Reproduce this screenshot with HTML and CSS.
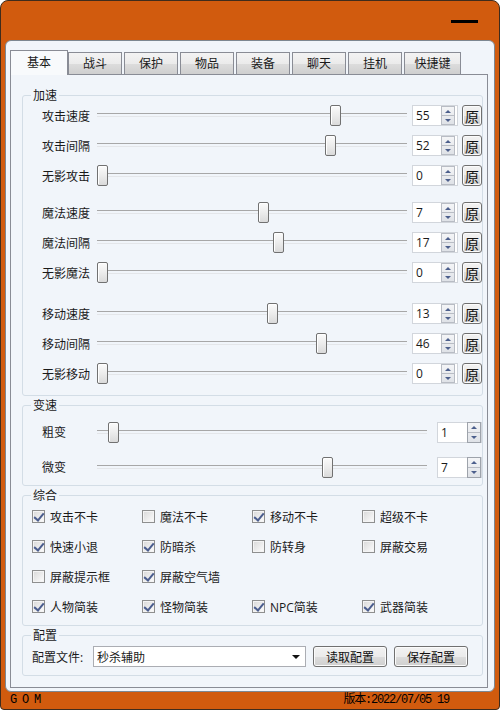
FILE: index.html
```html
<!DOCTYPE html>
<html lang="zh-CN">

<head>
    <meta charset="UTF-8">
    <meta name="viewport" content="width=device-width, initial-scale=1.0">
    <title>GOM</title>
    <link rel="stylesheet" href="styles.css">
</head>

<body>
    <div class="window">
        <div class="titlebar"><span class="min-btn"></span></div>

        <div class="client">
            <div class="tabs">
                <div class="tab active">基本</div>
                <div class="tab">战斗</div>
                <div class="tab">保护</div>
                <div class="tab">物品</div>
                <div class="tab">装备</div>
                <div class="tab">聊天</div>
                <div class="tab">挂机</div>
                <div class="tab wide">快捷键</div>
            </div>

            <div class="pane">
                <!-- 加速 -->
                <div class="group speed">
                    <span class="group-title">加速</span>

                    <div class="block">
                        <div class="row">
                            <span class="label">攻击速度</span>
                            <div class="track"><span class="thumb" style="left: 233px"></span></div>
                            <div class="spin"><span class="num">55</span><span class="arrows"><i class="up"></i><i class="down"></i></span></div>
                            <button class="reset">原</button>
                        </div>
                        <div class="row">
                            <span class="label">攻击间隔</span>
                            <div class="track"><span class="thumb" style="left: 228px"></span></div>
                            <div class="spin"><span class="num">52</span><span class="arrows"><i class="up"></i><i class="down"></i></span></div>
                            <button class="reset">原</button>
                        </div>
                        <div class="row">
                            <span class="label">无影攻击</span>
                            <div class="track"><span class="thumb" style="left: 0px"></span></div>
                            <div class="spin"><span class="num">0</span><span class="arrows"><i class="up"></i><i class="down"></i></span></div>
                            <button class="reset">原</button>
                        </div>
                    </div>

                    <div class="block magic">
                        <div class="row">
                            <span class="label">魔法速度</span>
                            <div class="track"><span class="thumb" style="left: 161px"></span></div>
                            <div class="spin"><span class="num">7</span><span class="arrows"><i class="up"></i><i class="down"></i></span></div>
                            <button class="reset">原</button>
                        </div>
                        <div class="row">
                            <span class="label">魔法间隔</span>
                            <div class="track"><span class="thumb" style="left: 176px"></span></div>
                            <div class="spin"><span class="num">17</span><span class="arrows"><i class="up"></i><i class="down"></i></span></div>
                            <button class="reset">原</button>
                        </div>
                        <div class="row">
                            <span class="label">无影魔法</span>
                            <div class="track"><span class="thumb" style="left: 0px"></span></div>
                            <div class="spin"><span class="num">0</span><span class="arrows"><i class="up"></i><i class="down"></i></span></div>
                            <button class="reset">原</button>
                        </div>
                    </div>

                    <div class="block move">
                        <div class="row">
                            <span class="label">移动速度</span>
                            <div class="track"><span class="thumb" style="left: 170px"></span></div>
                            <div class="spin"><span class="num">13</span><span class="arrows"><i class="up"></i><i class="down"></i></span></div>
                            <button class="reset">原</button>
                        </div>
                        <div class="row">
                            <span class="label">移动间隔</span>
                            <div class="track"><span class="thumb" style="left: 219px"></span></div>
                            <div class="spin"><span class="num">46</span><span class="arrows"><i class="up"></i><i class="down"></i></span></div>
                            <button class="reset">原</button>
                        </div>
                        <div class="row">
                            <span class="label">无影移动</span>
                            <div class="track"><span class="thumb" style="left: 0px"></span></div>
                            <div class="spin"><span class="num">0</span><span class="arrows"><i class="up"></i><i class="down"></i></span></div>
                            <button class="reset">原</button>
                        </div>
                    </div>
                </div>

                <!-- 变速 -->
                <div class="group shift">
                    <span class="group-title">变速</span>
                    <div class="row">
                        <span class="label">粗变</span>
                        <div class="track long"><span class="thumb" style="left: 11px"></span></div>
                        <div class="spin buddy"><span class="num">1</span><span class="arrows"><i class="up"></i><i class="down"></i></span></div>
                    </div>
                    <div class="row">
                        <span class="label">微变</span>
                        <div class="track long"><span class="thumb" style="left: 225px"></span></div>
                        <div class="spin buddy"><span class="num">7</span><span class="arrows"><i class="up"></i><i class="down"></i></span></div>
                    </div>
                </div>

                <!-- 综合 -->
                <div class="group misc">
                    <span class="group-title">综合</span>
                    <div class="checks">
                        <label class="opt"><span class="box on"></span>攻击不卡</label>
                        <label class="opt"><span class="box"></span>魔法不卡</label>
                        <label class="opt"><span class="box on"></span>移动不卡</label>
                        <label class="opt"><span class="box"></span>超级不卡</label>

                        <label class="opt"><span class="box on"></span>快速小退</label>
                        <label class="opt"><span class="box on"></span>防暗杀</label>
                        <label class="opt"><span class="box"></span>防转身</label>
                        <label class="opt"><span class="box"></span>屏蔽交易</label>

                        <label class="opt"><span class="box"></span>屏蔽提示框</label>
                        <label class="opt"><span class="box on"></span>屏蔽空气墙</label>
                        <span></span>
                        <span></span>

                        <label class="opt"><span class="box on"></span>人物简装</label>
                        <label class="opt"><span class="box on"></span>怪物简装</label>
                        <label class="opt"><span class="box on"></span>NPC简装</label>
                        <label class="opt"><span class="box on"></span>武器简装</label>
                    </div>
                </div>

                <!-- 配置 -->
                <div class="group config">
                    <span class="group-title">配置</span>
                    <div class="row">
                        <span class="label">配置文件:</span>
                        <div class="combo"><span>秒杀辅助</span><i class="drop"></i></div>
                        <button class="btn">读取配置</button>
                        <button class="btn">保存配置</button>
                    </div>
                </div>
            </div>
        </div>

        <div class="status">
            <span>G O M</span>
            <span>版本:2022/07/05 19</span>
        </div>
    </div>
</body>

</html>
```

FILE: styles.css
```css
* {
    box-sizing: border-box;
}

body {
    margin: 0;
    background: #fff;
    font-family: "Open Sans", "Noto Sans CJK SC", sans-serif;
    font-size: 12px;
    color: #1a1a1a;
}

.window {
    width: 500px;
    height: 710px;
    background: #d15b0e;
    border: 1px solid #3f2c1c;
    border-radius: 8px 8px 4px 4px;
    display: flex;
    flex-direction: column;
}

.titlebar {
    height: 39px;
    display: flex;
    justify-content: flex-end;
    padding: 19px 21px 0 0;
}

.min-btn {
    width: 27px;
    height: 3px;
    background: #000;
}

.client {
    height: 653px;
    margin: 0 4px;
    border: 1px solid #7d8791;
    border-radius: 6px;
    background: #f1f5fa;
    padding: 9px 6px 3px 4px;
    display: flex;
    flex-direction: column;
}

/* tabs */
.tabs {
    display: flex;
    align-items: flex-end;
    height: 24px;
}

.tab {
    width: 54px;
    height: 22px;
    margin-right: 2px;
    border: 1px solid #898c95;
    border-bottom: none;
    background: linear-gradient(#f3f3f3, #ebebeb 50%, #dddddd 50%, #cfcfcf);
    text-align: center;
    line-height: 21px;
}

.tab.wide {
    width: 57px;
}

.tab.active {
    width: 58px;
    height: 25px;
    margin-right: 0;
    margin-bottom: -1px;
    background: #f8fafc;
    position: relative;
    z-index: 1;
    line-height: 23px;
}

.pane {
    flex: 1;
    border: 1px solid #898c95;
    padding: 20px 4px 0 11px;
    display: flex;
    flex-direction: column;
    gap: 9px;
}

/* group boxes */
.group {
    position: relative;
    border: 1px solid #d3dde6;
    border-radius: 3px;
}

.group-title {
    position: absolute;
    top: -9px;
    left: 8px;
    padding: 0 2px;
    background: #f1f5fa;
    line-height: 17px;
}

.speed {
    padding: 5px 0 6px 19px;
}

.block.magic {
    margin-top: 7px;
}

.block.move {
    margin-top: 11px;
}

.shift {
    padding: 9px 0 0 19px;
}

.shift .row {
    height: 35px;
}

.misc {
    padding: 6px 0 3px 9px;
}

.config {
    padding: 6px 0 3px 9px;
}

.row {
    height: 30px;
    display: flex;
    align-items: center;
}

.label {
    width: 55px;
    flex: none;
}

/* slider */
.track {
    position: relative;
    width: 310px;
    height: 21px;
    margin-right: 5px;
}

.track.long {
    width: 330px;
    margin-right: 10px;
}

.track::before {
    content: "";
    position: absolute;
    left: 0;
    right: 0;
    top: 8px;
    height: 2px;
    border-top: 1px solid #a7a7a7;
    border-bottom: 1px solid #e4e6e9;
}

.thumb {
    position: absolute;
    top: 0;
    width: 11px;
    height: 21px;
    border: 1px solid #717171;
    border-radius: 2px;
    background: linear-gradient(#fbfbfb, #ececec 50%, #dadada);
    box-shadow: inset 1px 1px 0 #fff;
}

/* spin box */
.spin {
    width: 46px;
    height: 21px;
    border: 1px solid #d2d6dc;
    background: #fff;
    display: flex;
    align-items: center;
    justify-content: space-between;
    padding: 0 2px 0 3px;
    margin-right: 4px;
}

.spin.buddy {
    width: 45px;
    margin-right: 0;
    padding-right: 0;
}

.num {
    line-height: 17px;
}

.arrows {
    width: 14px;
    height: 19px;
    border: 1px solid #b8bcc4;
    display: flex;
    flex-direction: column;
    background: linear-gradient(#f4f5f7, #dfe2e7);
}

.buddy .arrows {
    height: 21px;
    border-color: #9ea3ab;
}

.arrows i {
    flex: 1;
    display: flex;
    align-items: center;
    justify-content: center;
}

.arrows i + i {
    border-top: 1px solid #b8bcc4;
}

.arrows i::before {
    content: "";
    border-left: 3px solid transparent;
    border-right: 3px solid transparent;
}

.arrows .up::before {
    border-bottom: 3px solid #4c5f8c;
}

.arrows .down::before {
    border-top: 3px solid #4c5f8c;
}

/* buttons */
.reset,
.btn {
    border: 1px solid #707070;
    border-radius: 3px;
    background: linear-gradient(#f2f2f2, #ebebeb 50%, #dddddd 50%, #cfcfcf);
    box-shadow: inset 0 0 0 1px #fbfbfb;
    font-family: "Noto Sans CJK SC", sans-serif;
    color: #111;
    padding: 0;
}

.reset {
    width: 20px;
    height: 21px;
    font-size: 14px;
    line-height: 18px;
}

.btn {
    width: 74px;
    height: 21px;
    font-size: 12px;
    line-height: 18px;
    margin-left: 7px;
}

/* check boxes */
.checks {
    display: grid;
    grid-template-columns: repeat(4, 110px);
    grid-auto-rows: 30px;
}

.opt {
    display: flex;
    align-items: center;
    gap: 5px;
}

.box {
    width: 13px;
    height: 13px;
    border: 1px solid #8e8f8f;
    background: linear-gradient(135deg, #d8d8d8, #fdfdfd);
    box-shadow: inset 0 0 0 1px #f4f4f4;
    position: relative;
}

.box.on::after {
    content: "";
    position: absolute;
    left: 3px;
    top: 0px;
    width: 4px;
    height: 8px;
    border-right: 2px solid #4a5d8e;
    border-bottom: 2px solid #4a5d8e;
    transform: rotate(40deg);
}

/* config */
.config .label {
    width: 61px;
}

.combo {
    width: 213px;
    height: 21px;
    border: 1px solid #abadb3;
    background: #fff;
    display: flex;
    align-items: center;
    justify-content: space-between;
    padding: 0 5px 0 3px;
}

.drop {
    border-left: 4px solid transparent;
    border-right: 4px solid transparent;
    border-top: 4px solid #111;
}

/* status bar */
.status {
    height: 17px;
    display: flex;
    justify-content: space-between;
    padding: 0 50px 0 9px;
    font-family: "Liberation Mono", "Noto Sans CJK SC", monospace;
    font-size: 12px;
    letter-spacing: -1.2px;
    line-height: 17px;
    color: #000;
    white-space: pre;
}
```
